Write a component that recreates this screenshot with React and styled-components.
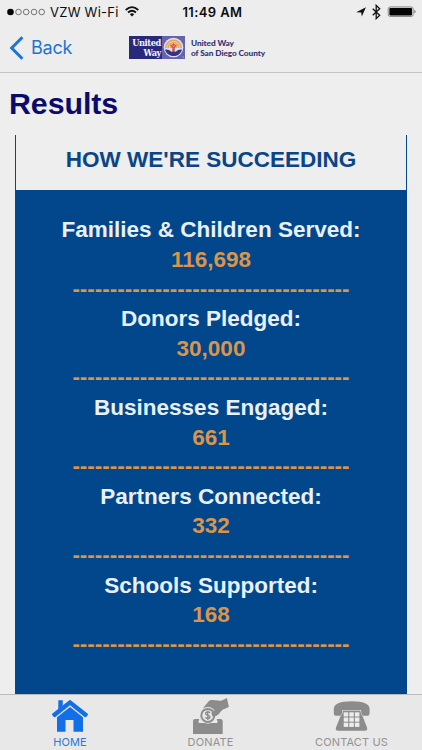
import React from "react";
import styled, { createGlobalStyle } from "styled-components";

const GlobalStyle = createGlobalStyle`
  * { box-sizing: border-box; }
  body { margin: 0; background: #eeeeee; }
`;

const Screen = styled.div`
  display: flex;
  flex-direction: column;
  width: 422px;
  height: 750px;
  overflow: hidden;
  background: #eeeeee;
  font-family: Inter, "Liberation Sans", sans-serif;
`;

const StatusBar = styled.header`
  display: grid;
  grid-template-columns: 1fr 64px 1fr;
  align-items: center;
  height: 23px;
  flex: none;
  padding: 0 5px 0 7px;
  background: #ededed;
  color: #0c0c0c;
`;

const StatusGroup = styled.div`
  display: flex;
  align-items: center;
  justify-content: ${(p) => (p.$end ? "flex-end" : "flex-start")};
`;

const Carrier = styled.span`
  margin: 0 6px 0 4px;
  font-size: 13px;
  line-height: 16px;
  letter-spacing: 0.25px;
  white-space: nowrap;
`;

const Clock = styled.time`
  padding-left: 1px;
  font-size: 13px;
  font-weight: 600;
  line-height: 16px;
  letter-spacing: 0.4px;
  text-align: center;
  white-space: nowrap;
`;

const NavBar = styled.nav`
  display: flex;
  align-items: center;
  flex: none;
  height: 50px;
  padding: 0 9px;
  border-bottom: 1px solid #c3c3c3;
  background: #ededed;
`;

const BackButton = styled.button`
  display: flex;
  align-items: center;
  gap: 7px;
  width: 120px;
  padding: 0;
  border: 0;
  background: none;
  color: #1c74d6;
  font: 400 18px/24px Inter, sans-serif;
  letter-spacing: -0.2px;
`;

const Brand = styled.div`
  display: flex;
  align-items: center;
  gap: 6px;
`;

const LogoMark = styled.div`
  display: flex;
  width: 56px;
  height: 23px;
  background: #28297b;
`;

const LogoName = styled.div`
  width: 33px;
  padding: 2px 1px 0 0;
  color: #f5f5ff;
  font: 700 9.2px/9.5px "DejaVu Serif Condensed", "DejaVu Serif", serif;
  letter-spacing: -0.4px;
  text-align: right;
`;

const BrandText = styled.div`
  color: #35336f;
  font: 900 8.3px/10px Lato, "Open Sans", sans-serif;
  letter-spacing: -0.1px;
  white-space: nowrap;
`;

const Content = styled.main`
  display: flex;
  flex: 1;
  flex-direction: column;
  min-height: 0;
  padding: 13px 15px 0;
  font-family: "Liberation Sans", Arial, sans-serif;
`;

const Title = styled.h1`
  margin: 0 0 14px -6px;
  color: #0b0b6b;
  font-size: 30.4px;
  line-height: 35px;
  letter-spacing: -0.1px;
`;

const Card = styled.section`
  display: flex;
  flex: 1;
  flex-direction: column;
  border: solid #02468b;
  border-width: 0 1px;
  text-align: center;
`;

const CardTitle = styled.h2`
  flex: none;
  height: 55px;
  margin: 0;
  padding-top: 10px;
  color: #0a4587;
  font-size: 22.5px;
  line-height: 30px;
`;

const Stats = styled.div`
  flex: 1;
  padding-top: 25.4px;
  background: #02468b;
  font-size: 22.5px;
  font-weight: 700;
  line-height: 29.6px;
  white-space: nowrap;
`;

const Label = styled.div`
  color: #e8f1fb;
`;

const Value = styled.div`
  color: #d9954a;
`;

const Divider = styled(Value)`
  height: 29.6px;
  line-height: 28.4px;
`;

const TabBar = styled.footer`
  display: grid;
  grid-template-columns: 140px 141px 141px;
  flex: none;
  height: 56px;
  border-top: 1px solid #b9bbbd;
  background: #e8e8e8;
`;

const Tab = styled.a`
  display: flex;
  flex-direction: column;
  align-items: center;
  padding-top: 3px;
  color: ${(p) => (p.$active ? "#2878d4" : "#929292")};
  font-size: 11px;
  line-height: 14px;
  letter-spacing: 0.15px;
`;

const TabIcon = styled.svg`
  display: block;
  margin-bottom: 1px;
`;

const stats = [
  ["Families & Children Served:", "116,698"],
  ["Donors Pledged:", "30,000"],
  ["Businesses Engaged:", "661"],
  ["Partners Connected:", "332"],
  ["Schools Supported:", "168"],
];

function SignalDots() {
  return (
    <svg width="39" height="8" viewBox="0 0 39 8">
      <circle cx="3.5" cy="4" r="3.3" fill="#050505" />
      {[11.5, 19.2, 27, 34.7].map((x) => (
        <circle key={x} cx={x} cy="4" r="2.8" fill="none" stroke="#444" strokeWidth="0.7" />
      ))}
    </svg>
  );
}

function Wifi() {
  return (
    <svg width="14" height="11" viewBox="0 0 14 11" fill="none" stroke="#111" strokeWidth="1.7">
      <path d="M.7 4Q7-1.8 13.3 4M3 6.5Q7 3 11 6.5" />
      <path d="M4.8 8.2Q7 6.4 9.2 8.2L7 10.5Z" fill="#111" stroke="none" />
    </svg>
  );
}

function StatusIcons() {
  return (
    <svg width="61" height="16" viewBox="0 0 61 16">
      <path d="M.2 8.2 9.9 3.2 5.8 12.6 5.2 8.4Z" fill="#111" />
      <path d="M16.7 4.8 23.7 11.2 20.2 14.6V1.4l3.5 3.4-7 6.4" fill="none" stroke="#111" strokeWidth="1.3" />
      <rect x="32.2" y="2.9" width="25" height="9.6" rx="2" fill="#ddd" stroke="#777" strokeWidth=".8" />
      <rect x="33.4" y="4" width="22.6" height="7.4" rx=".8" fill="#050505" />
      <path d="M58.5 5.8q2.2 1.9 0 3.8Z" fill="#555" />
    </svg>
  );
}

function LogoEmblem() {
  return (
    <svg width="23" height="23" viewBox="0 0 23 23">
      <path d="M0 0h23v23H0z" fill="#6563aa" />
      <circle cx="11.5" cy="11.5" r="9.8" fill="#dedcec" />
      <path d="M3 12a8.5 8.5 0 0 1 17 0Z" fill="#e8a35f" />
      <path d="M5 12a6.5 6.5 0 0 1 13 0M7.3 12a4.2 4.2 0 0 1 8.4 0" fill="none" stroke="#f8d5a3" strokeWidth="1" />
      <circle cx="11.5" cy="8.6" r="1.2" fill="#cf4843" />
      <path d="m8.6 8.8 2.3 2.7v4h1.2v-4l2.3-2.7" fill="none" stroke="#cf4843" strokeWidth="1.1" />
      <path d="M3 13.5c3-.2 4.5.4 6.3 2.2h4.5c1.8-1.8 3.5-2.4 6.2-2.2-1.2 4.6-4.6 6.5-8.5 6.5S4 17.8 3 13.5Z" fill="#343384" />
      <circle cx="21" cy="21" r=".5" fill="#eee" />
    </svg>
  );
}

function HomeIcon() {
  return (
    <TabIcon width="38" height="36" viewBox="0 0 38 36" fill="#126fe8">
      <path d="M7.3 2.3h4.5v5.5l-4.5 4Z" />
      <path d="M19 1.8 36.5 15.5q1 .8.2 1.7l-1.3 1.6q-.8.9-1.8.1L19 7.2 4.4 18.9q-1 .8-1.8-.1l-1.3-1.6q-.8-.9.2-1.7Z" />
      <path d="M6 19.2 19 8.9l13 10.3v14.5h-9.5V22h-8v11.7H6Z" />
    </TabIcon>
  );
}

function DonateIcon() {
  return (
    <TabIcon width="38" height="36" viewBox="0 0 38 36" fill="#8c8c8c">
      <path d="M3 21h4.2q-.9 2-.5 4h18.6q.6-2-.6-4h3.7q2.3 0 2.3 2.3V36H1V23.3Q1 21 3 21Z" />
      <path d="m10.7 10.5 6-7.3Q18 1.7 20.5 2l8.3.7q1.2 0 2-.7L34.9.1l2 8.8-6.3 2.8-4.6 4.8q-1.8 1.8-4.5 1.3L18 10Z" />
      <circle cx="15.8" cy="17.4" r="8.3" fill="#e8e8e8" />
      <circle cx="15.8" cy="17.4" r="6.5" fill="none" stroke="#8c8c8c" strokeWidth="2" />
      <path d="M18.2 14.6c-1.5-1.2-4.6-.8-4.6.9 0 2.3 4.7 1.5 4.4 3.6-.3 1.8-3.3 1.7-4.8.4M15.8 12.7v9.4" fill="none" stroke="#8c8c8c" strokeWidth="1.4" />
      <path d="m19.3 14.7 4.1-2.5 4.1 3-3.2 2.6q-2.1 1.2-4 .4Z" />
    </TabIcon>
  );
}

function PhoneIcon() {
  return (
    <TabIcon width="38" height="36" viewBox="0 0 38 36" fill="#8c8c8c">
      <path d="M10.4 11h16.4l7.2 18.6q1 3.2-2.2 3.2H5.2Q2 32.8 3 29.6Z" />
      <path d="M.8 15.5V10.8Q1 7.2 4.2 5.7 9.7 3.3 18.7 3.3t14.4 2.4q3.3 1.5 3.5 5.1v4.7q0 2.2-2.2 2.2h-3.8q-1.8 0-2.2-2.2l-.4-3.4H9.4L9 15.5q-.4 2.2-2.2 2.2H3Q.8 17.7.8 15.5Z" stroke="#e8e8e8" strokeWidth="1" paintOrder="stroke" />
      {[14.3, 19.5, 24.7].map((y) =>
        [10.7, 16.3, 21.9].map((x) => (
          <path key={`${x}-${y}`} d={`M${x} ${y}h4.5v4.2h-4.5z`} fill="#ededed" />
        ))
      )}
    </TabIcon>
  );
}

export default function App() {
  return (
    <Screen>
      <GlobalStyle />
      <StatusBar>
        <StatusGroup>
          <SignalDots />
          <Carrier>VZW Wi-Fi</Carrier>
          <Wifi />
        </StatusGroup>
        <Clock>11:49 AM</Clock>
        <StatusGroup $end>
          <StatusIcons />
        </StatusGroup>
      </StatusBar>
      <NavBar>
        <BackButton>
          <svg width="15" height="24" viewBox="0 0 15 24" fill="none" stroke="#1c74d6" strokeWidth="3">
            <path d="M13.4 1.2 2.7 12l10.7 10.8" />
          </svg>
          Back
        </BackButton>
        <Brand>
          <LogoMark>
            <LogoName>United<br />Way</LogoName>
            <LogoEmblem />
          </LogoMark>
          <BrandText>United Way<br />of San Diego County</BrandText>
        </Brand>
      </NavBar>
      <Content>
        <Title>Results</Title>
        <Card>
          <CardTitle>HOW WE'RE SUCCEEDING</CardTitle>
          <Stats>
            {stats.map(([label, value]) => (
              <React.Fragment key={label}>
                <Label>{label}</Label>
                <Value>{value}</Value>
                <Divider aria-hidden="true">{"-".repeat(37)}</Divider>
              </React.Fragment>
            ))}
          </Stats>
        </Card>
      </Content>
      <TabBar>
        <Tab $active><HomeIcon />HOME</Tab>
        <Tab><DonateIcon />DONATE</Tab>
        <Tab><PhoneIcon />CONTACT US</Tab>
      </TabBar>
    </Screen>
  );
}
